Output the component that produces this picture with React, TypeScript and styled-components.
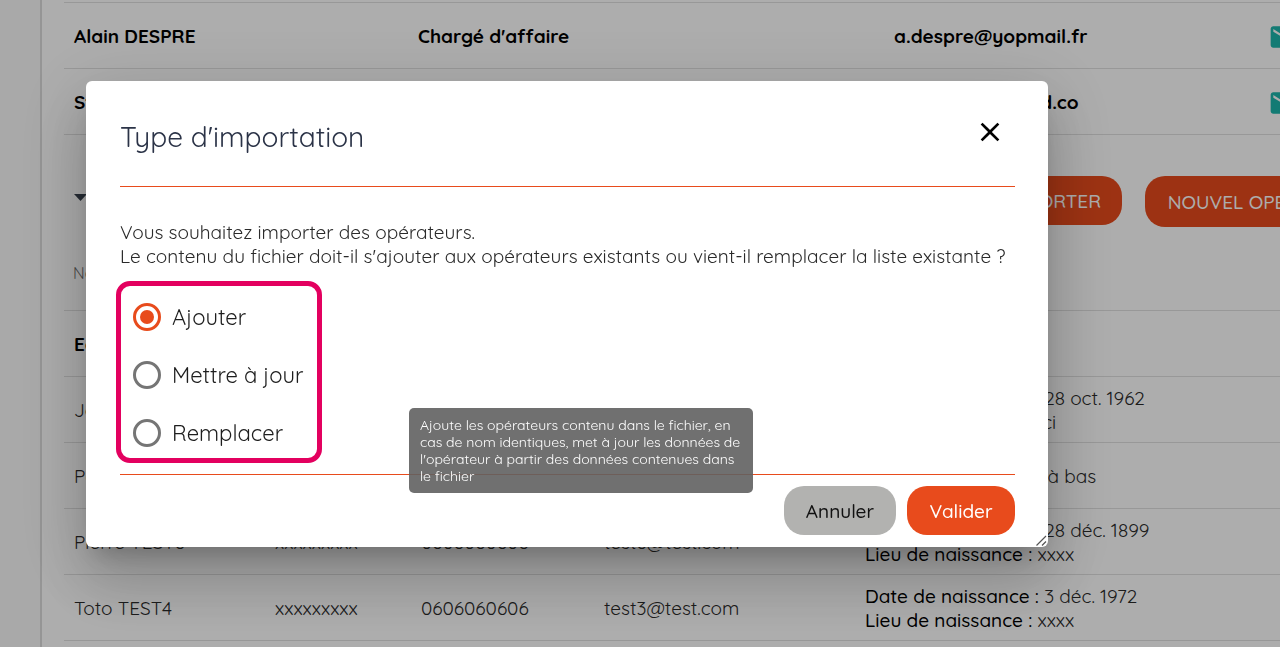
import React from 'react';
import styled, { createGlobalStyle } from 'styled-components';

const ORANGE = '#e84b1c';
const FONT = '"Quicksand", "Lato", sans-serif';

const GlobalStyle = createGlobalStyle`
  *, *::before, *::after { box-sizing: border-box; }
  body { margin: 0; background: #fafafa; color: #000; font-family: ${FONT}; }
  button, input { font: inherit; }
`;

const Page = styled.div`
  height: 100vh;
  overflow: hidden;
  padding-left: 40px;
`;

const Card = styled.main`
  min-height: 100%;
  padding: 2px 0 40px 22px;
  background: #fff;
  border-left: 2px solid #dcdcdc;
`;

const Section = styled.section`
  width: 1317px;
`;

const Table = styled.table`
  width: 100%;
  table-layout: fixed;
  border-collapse: separate;
  border-spacing: 0;
  font-size: 19px;
  line-height: 24px;
`;

const Cell = styled.td<{ $strong?: boolean }>`
  height: 66px;
  padding: 0 0 0 10px;
  border-bottom: 1px solid #e0e0e0;
  font-weight: ${(p) => (p.$strong ? 700 : 400)};
  color: ${(p) => (p.$strong ? '#000' : '#2a2a2a')};
  white-space: nowrap;
`;

const IconCell = styled(Cell)`
  padding: 2px 0 0 8px;
`;

const HeadCell = styled.th`
  height: 76px;
  padding: 0 0 0 9px;
  border-bottom: 1px solid #e0e0e0;
  font-size: 16px;
  font-weight: 400;
  text-align: left;
  color: #6b6b6b;
`;

const ManagersTable = styled(Table)`
  border-top: 1px solid #e0e0e0;
`;

const Label = styled.span`
  font-weight: 500;
  color: #000;
`;

const MailLink = styled.a`
  display: block;
  height: 32px;
  color: #1cb5ab;
`;

const Toolbar = styled.div`
  display: flex;
  justify-content: space-between;
  align-items: flex-start;
  height: 100px;
  padding: 41px 0 0 10px;
`;

const CaretButton = styled.button`
  display: flex;
  margin: 18px 0 0;
  padding: 0;
  border: 0;
  background: none;
  color: #38414e;
`;

const Actions = styled.div`
  display: flex;
  align-items: flex-start;
  gap: 23px;
`;

const Pill = styled.button<{ $muted?: boolean; $width?: number; $tall?: boolean }>`
  min-width: ${(p) => p.$width || 108}px;
  height: ${(p) => (p.$tall ? 51 : 49)}px;
  padding: 0 21px;
  border: 0;
  border-radius: 20px;
  background: ${(p) => (p.$muted ? '#b2b2b0' : ORANGE)};
  color: ${(p) => (p.$muted ? '#111' : '#fff')};
  font-size: 19px;
  font-weight: 500;
  line-height: 24px;
  white-space: nowrap;
`;

const Backdrop = styled.div`
  position: fixed;
  inset: 0;
  padding: 81px 232px 0 86px;
  background: rgba(0, 0, 0, 0.32);
`;

const Dialog = styled.div`
  position: relative;
  padding: 0 33px 12px 34px;
  border-radius: 6px;
  background: #fff;
  box-shadow: 0 16px 22px -10px rgba(0, 0, 0, 0.2), 0 36px 57px 4px rgba(0, 0, 0, 0.14),
    0 14px 69px 12px rgba(0, 0, 0, 0.12);
`;

const DialogHeader = styled.header`
  display: flex;
  justify-content: space-between;
  align-items: flex-start;
  height: 106px;
  padding-top: 26px;
  border-bottom: 1px solid ${ORANGE};
`;

const Title = styled.h2`
  margin: 0;
  font-size: 28px;
  line-height: 60px;
  font-weight: 400;
  color: #2b3347;
`;

const CloseButton = styled.button`
  display: flex;
  padding: 9px;
  border: 0;
  background: none;
  color: #000;
`;

const Message = styled.p`
  margin: 33px 0 13px;
  font-size: 19px;
  line-height: 24px;
  color: #2a2a2a;
  white-space: nowrap;
`;

const Choices = styled.fieldset`
  display: flex;
  flex-direction: column;
  gap: 28px;
  width: 206px;
  margin: 0 0 0 -4px;
  padding: 16px 0 10px 12px;
  border: 5px solid #e3005f;
  border-radius: 14px;
`;

const Choice = styled.label`
  display: flex;
  align-items: center;
  gap: 11px;
  height: 30px;
  font-size: 22px;
  line-height: 30px;
  color: #1e1e1e;
  white-space: nowrap;
`;

const Radio = styled.input`
  appearance: none;
  display: grid;
  place-items: center;
  flex: none;
  width: 28px;
  height: 28px;
  margin: 0;
  border: 3px solid #757575;
  border-radius: 50%;

  &:checked {
    border-color: ${ORANGE};
  }

  &:checked::before {
    content: '';
    width: 14px;
    height: 14px;
    border-radius: 50%;
    background: ${ORANGE};
  }
`;

const DialogFooter = styled.footer`
  display: flex;
  justify-content: flex-end;
  gap: 11px;
  margin-top: 11px;
  padding-top: 11px;
  border-top: 1px solid ${ORANGE};
`;

const Tooltip = styled.div`
  position: absolute;
  left: 323px;
  top: 327px;
  width: 344px;
  padding: 9px 11px 8px;
  border-radius: 5px;
  background: rgba(97, 97, 97, 0.9);
  color: #fff;
  font-size: 14px;
  line-height: 17px;
`;

const Grip = styled.svg`
  position: absolute;
  right: 0;
  bottom: 0;
`;

const managers = [
  { name: 'Alain DESPRE', role: "Chargé d'affaire", mail: 'a.despre@yopmail.fr' },
  { name: 'Stéphanie', role: "Chargé d'affaire", mail: 'stephanie@cloud.co' },
];

type Operator = { name: string; strong?: boolean; job?: string; phone?: string; mail?: string; info?: [string, string][] };

const operators: Operator[] = [
  { name: 'Edouard', strong: true },
  { name: 'John', info: [['Date de naissance :', '28 oct. 1962'], ['Lieu de naissance :', 'Ici']] },
  { name: 'Peter', info: [['Lieu de naissance :', 'Là bas']] },
  { name: 'Pierre TEST6', job: 'xxxxxxxxx', phone: '0606060606', mail: 'test6@test.com', info: [['Date de naissance :', '28 déc. 1899'], ['Lieu de naissance :', 'xxxx']] },
  { name: 'Toto TEST4', job: 'xxxxxxxxx', phone: '0606060606', mail: 'test3@test.com', info: [['Date de naissance :', '3 déc. 1972'], ['Lieu de naissance :', 'xxxx']] },
];

const MailIcon = () => (
  <svg width="32" height="32" viewBox="0 0 24 24" fill="currentColor" aria-hidden="true">
    <path d="M20 4H4c-1.100 0-2 .9-2 2v12c0 1.100.9 2 2 2h16c1.100 0 2-.9 2-2V6c0-1.100-.9-2-2-2zm0 4l-8 5-8-5V6l8 5 8-5v2z" />
  </svg>
);

export default function App() {
  return (
    <>
      <GlobalStyle />
      <Page>
        <Card>
          <Section>
            <ManagersTable>
              <colgroup>
                <col width="344" />
                <col width="476" />
                <col width="376" />
                <col />
              </colgroup>
              <tbody>
                {managers.map((m) => (
                  <tr key={m.name}>
                    <Cell $strong>{m.name}</Cell>
                    <Cell $strong>{m.role}</Cell>
                    <Cell $strong>{m.mail}</Cell>
                    <IconCell>
                      <MailLink href={`mailto:${m.mail}`} aria-label={m.mail}>
                        <MailIcon />
                      </MailLink>
                    </IconCell>
                  </tr>
                ))}
              </tbody>
            </ManagersTable>
            <Toolbar>
              <CaretButton aria-label="Replier">
                <svg width="13" height="7" viewBox="0 0 13 7" fill="currentColor">
                  <path d="M0 0h13L6.500 7z" />
                </svg>
              </CaretButton>
              <Actions>
                <Pill>IMPORTER</Pill>
                <Pill $width={236} $tall>NOUVEL OPERATEUR</Pill>
              </Actions>
            </Toolbar>
            <Table>
              <colgroup>
                <col width="201" />
                <col width="146" />
                <col width="183" />
                <col width="261" />
                <col />
              </colgroup>
              <thead>
                <tr>
                  <HeadCell>Nom</HeadCell>
                  <HeadCell />
                  <HeadCell />
                  <HeadCell />
                  <HeadCell />
                </tr>
              </thead>
              <tbody>
                {operators.map((o) => (
                  <tr key={o.name}>
                    <Cell $strong={o.strong}>{o.name}</Cell>
                    <Cell>{o.job}</Cell>
                    <Cell>{o.phone}</Cell>
                    <Cell>{o.mail}</Cell>
                    <Cell>
                      {o.info?.map(([label, value]) => (
                        <div key={label}>
                          <Label>{label}</Label> {value}
                        </div>
                      ))}
                    </Cell>
                  </tr>
                ))}
              </tbody>
            </Table>
          </Section>
        </Card>
      </Page>
      <Backdrop>
        <Dialog role="dialog" aria-modal="true" aria-labelledby="import-title">
          <DialogHeader>
            <Title id="import-title">Type d'importation</Title>
            <CloseButton aria-label="Fermer">
              <svg width="32" height="32" viewBox="0 0 24 24" fill="currentColor">
                <path d="M19 6.410L17.590 5 12 10.590 6.410 5 5 6.410 10.590 12 5 17.590 6.410 19 12 13.410 17.590 19 19 17.590 13.410 12z" />
              </svg>
            </CloseButton>
          </DialogHeader>
          <Message>
            Vous souhaitez importer des opérateurs.
            <br />
            Le contenu du fichier doit-il s'ajouter aux opérateurs existants ou vient-il remplacer la liste existante ?
          </Message>
          <Choices aria-label="Type d'importation">
            <Choice>
              <Radio type="radio" name="mode" defaultChecked />
              Ajouter
            </Choice>
            <Choice>
              <Radio type="radio" name="mode" />
              Mettre à jour
            </Choice>
            <Choice>
              <Radio type="radio" name="mode" />
              Remplacer
            </Choice>
          </Choices>
          <DialogFooter>
            <Pill $muted $width={112}>Annuler</Pill>
            <Pill>Valider</Pill>
          </DialogFooter>
          <Tooltip role="tooltip">
            Ajoute les opérateurs contenu dans le fichier, en
            <br />
            cas de nom identiques, met à jour les données de
            <br />
            l'opérateur à partir des données contenues dans
            <br />
            le fichier
          </Tooltip>
          <Grip width="13" height="13" viewBox="0 0 13 13" stroke="#555" strokeWidth="1.200" aria-hidden="true">
            <path d="M1.500 11.500L11 2M7 11.500L11 7.500" />
          </Grip>
        </Dialog>
      </Backdrop>
    </>
  );
}
